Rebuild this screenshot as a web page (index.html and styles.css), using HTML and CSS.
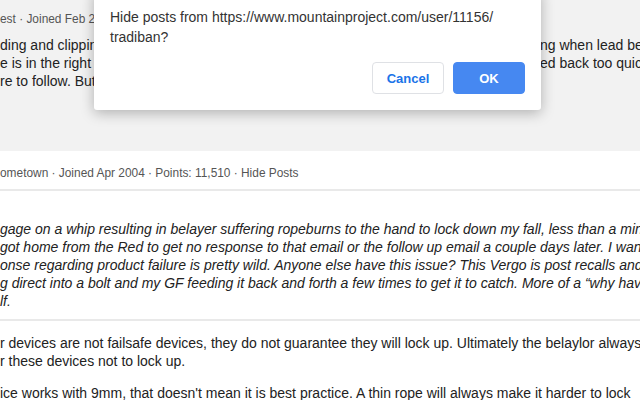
FILE: index.html
```html
<!DOCTYPE html>
<html>
<head>
<meta charset="utf-8">
<link rel="stylesheet" href="styles.css">
</head>
<body>
<div class="page">
  <section class="post post-muted">
    <div class="meta">est · Joined Feb 2015 · Points: 1,245 · Hide Posts</div>
    <div class="body body-split">
      <div class="row"><span class="l">ding and clipping above your head is not a problem for most people, but something</span><span class="r">ng when lead belaying</span></div>
      <div class="row"><span class="l">e is in the right spot and the rope gets fed out in a hurry and then gets pull</span><span class="r">ed back too quickly</span></div>
      <div class="row"><span class="l">re to follow. But that is something else entirely.</span><span class="r"></span></div>
    </div>
  </section>

  <section class="post">
    <div class="meta meta-rule">ometown · Joined Apr 2004 · Points: 11,510 · Hide Posts</div>
    <div class="body italic">
      <div class="line">gage on a whip resulting in belayer suffering ropeburns to the hand to lock down my fall, less than a minute</div>
      <div class="line">got home from the Red to get no response to that email or the follow up email a couple days later. I want</div>
      <div class="line">onse regarding product failure is pretty wild. Anyone else have this issue? This Vergo is post recalls and</div>
      <div class="line">g direct into a bolt and my GF feeding it back and forth a few times to get it to catch. More of a “why have</div>
      <div class="line">lf.</div>
    </div>
  </section>

  <section class="post post-reply">
    <div class="body">
      <p class="para">
        <span class="line">r devices are not failsafe devices, they do not guarantee they will lock up. Ultimately the belaylor always</span>
        <span class="line">r these devices not to lock up.</span>
      </p>
      <p class="para">
        <span class="line">ice works with 9mm, that doesn't mean it is best practice. A thin rope will always make it harder to lock</span>
      </p>
    </div>
  </section>
</div>

<div class="dialog">
  <div class="dialog-msg">Hide posts from https://www.mountainproject.com/user/11156/<br>tradiban?</div>
  <div class="dialog-actions">
    <button class="btn btn-cancel">Cancel</button>
    <button class="btn btn-ok">OK</button>
  </div>
</div>
</body>
</html>
```

FILE: styles.css
```css
* { box-sizing: border-box; }
html, body {
  margin: 0;
  padding: 0;
  width: 640px;
  height: 400px;
  overflow: hidden;
  background: #ffffff;
  font-family: "Liberation Sans", Arial, sans-serif;
  color: #222;
}
.page {
  width: 640px;
}
.post {
  overflow: hidden;
}
.post-muted {
  background: #f2f2f2;
  height: 151px;
  padding-top: 10px;
}
.meta {
  font-size: 11.9px;
  line-height: 18px;
  color: #555;
  white-space: nowrap;
}
.post-muted .meta {
  margin-bottom: 8px;
}
.post:not(.post-muted) .meta-rule {
  margin-top: 13px;
  padding-bottom: 7px;
  border-bottom: 2px solid #e9e9e9;
}
.body {
  font-size: 14px;
  line-height: 18px;
  white-space: nowrap;
}
.body-split .row {
  display: grid;
  grid-template-columns: 540px 1fr;
  overflow: hidden;
}
.body-split .l, .body-split .r {
  overflow: hidden;
}
.italic {
  font-style: italic;
  padding-top: 29px;
  padding-bottom: 9px;
  border-bottom: 2px solid #e9e9e9;
}
.line {
  display: block;
  overflow: hidden;
}
.post-reply .body {
  padding-top: 13px;
}
.para {
  margin: 0 0 14px 0;
}

.dialog {
  position: absolute;
  left: 94px;
  top: -10px;
  width: 447px;
  height: 120px;
  background: #ffffff;
  border-radius: 0 0 3px 3px;
  box-shadow: 0 3px 14px rgba(0, 0, 0, 0.28);
  padding: 17px 16px 16px 16px;
  display: flex;
  flex-direction: column;
  justify-content: space-between;
  font-family: "Liberation Sans", Arial, sans-serif;
}
.dialog-msg {
  font-size: 14px;
  line-height: 20px;
  color: #333;
}
.dialog-actions {
  display: flex;
  justify-content: flex-end;
  gap: 9px;
}
.btn {
  width: 72px;
  height: 32px;
  border-radius: 4px;
  font-family: "Liberation Sans", Arial, sans-serif;
  font-size: 13px;
  font-weight: bold;
  cursor: pointer;
}
.btn-cancel {
  background: #ffffff;
  border: 1px solid #dfe1e5;
  color: #1a73e8;
}
.btn-ok {
  background: #4688f1;
  border: 1px solid #4688f1;
  color: #ffffff;
}
```
